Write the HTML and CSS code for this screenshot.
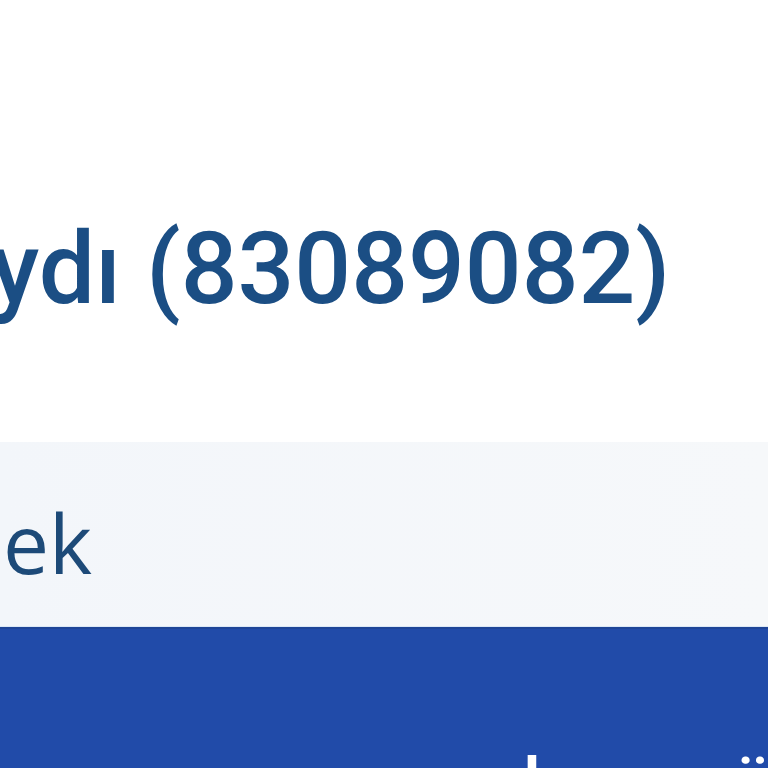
FILE: index.html
```html
<!DOCTYPE html>
<html lang="tr">
<head>
<meta charset="utf-8">
<link rel="stylesheet" href="styles.css">
</head>
<body>
<div class="page">
  <header class="head">
    <h1 class="title">Kaydı (83089082)</h1>
  </header>
  <section class="tabs">
    <span class="tab">Dilek</span>
  </section>
  <nav class="bar">
    <span class="bar-text"><span class="w1">l</span><span class="w2">ü</span></span>
  </nav>
</div>
</body>
</html>
```
FILE: styles.css
```css
html, body {
  margin: 0;
  padding: 0;
  background: #ffffff;
  overflow: hidden;
}
.page {
  width: 768px;
  height: 768px;
  display: flex;
  flex-direction: column;
  overflow: hidden;
}
.head {
  height: 442px;
  display: flex;
  align-items: center;
  background: #ffffff;
  overflow: hidden;
}
.title {
  margin: 96px 0 0 -126px;
  font-family: Roboto, "Liberation Sans", sans-serif;
  font-weight: 500;
  font-size: 100px;
  line-height: 1;
  color: #1b4e84;
  white-space: nowrap;
}
.tabs {
  height: 185px;
  background: linear-gradient(90deg, #f3f6fa 0%, #f6f8fa 100%);
  display: flex;
  align-items: center;
  overflow: hidden;
}
.tab {
  margin: 14px 0 0 -98px;
  font-family: "Open Sans", sans-serif;
  font-size: 82px;
  line-height: 1;
  color: #1d4a78;
  white-space: nowrap;
}
.bar {
  flex: 1;
  background: #214ba9;
  border-top: 2px solid #1e4597;
  box-shadow: 0 -1px 0 #dce8f5;
  overflow: hidden;
  display: flex;
  align-items: flex-start;
}
.bar-text {
  margin-top: 120px;
  font-family: Roboto, sans-serif;
  font-weight: 700;
  font-size: 60px;
  line-height: 1;
  color: #ffffff;
  white-space: nowrap;
}
.w1 { margin-left: 524px; }
.w2 { margin-left: 196px; }
```
